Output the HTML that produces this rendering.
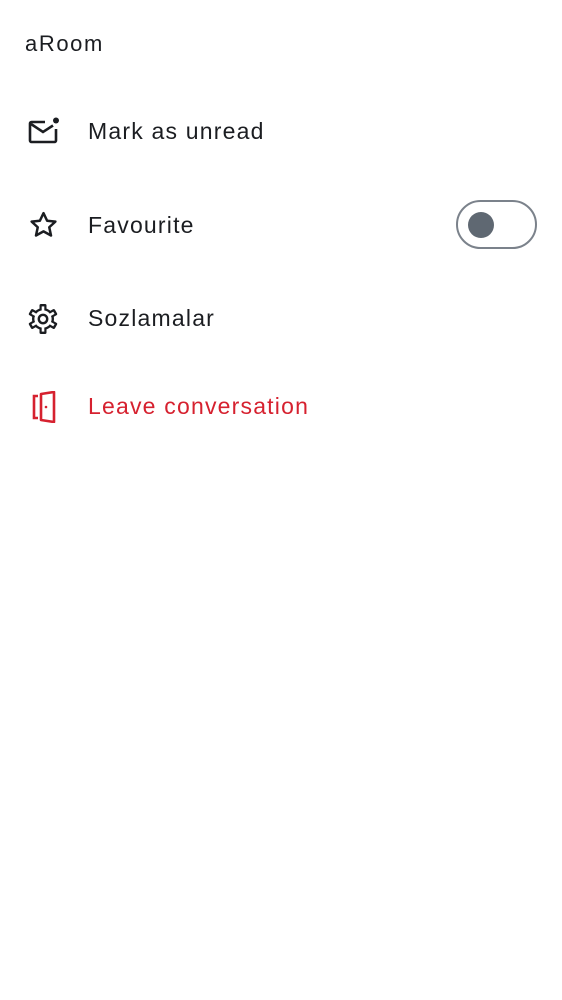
<!DOCTYPE html>
<html><head><meta charset="utf-8"><style>
body{margin:0;width:562px;height:1000px;background:#fff;font-family:"Liberation Sans",sans-serif;color:#1b1d21;position:relative;overflow:hidden}
.t{position:absolute;font-size:23px;letter-spacing:1.2px;line-height:1}
svg{position:absolute}
</style></head><body>
<div class="t" style="left:25px;top:33px;font-size:22px;letter-spacing:1.6px">aRoom</div>

<svg style="left:28px;top:117px" width="32" height="28" viewBox="0 0 32 28">
<path d="M17 5H3.5a1.5 1.5 0 0 0-1.5 1.5v17a1.5 1.5 0 0 0 1.5 1.5h23a1.5 1.5 0 0 0 1.5-1.5V12" fill="none" stroke="#1b1d21" stroke-width="2.6"/>
<path d="M3 7l12 8 10-6.5" fill="none" stroke="#1b1d21" stroke-width="2.6"/>
<circle cx="28" cy="3.5" r="3" fill="#1b1d21"/>
</svg>
<div class="t" style="left:88px;top:120px">Mark as unread</div>

<svg style="left:28px;top:210px" width="31" height="30" viewBox="0 0 24 24">
<path d="M12 2.5l2.9 6.1 6.6.7-4.9 4.5 1.4 6.6L12 17.1l-6 3.3 1.4-6.6-4.9-4.5 6.6-.7z" fill="none" stroke="#1b1d21" stroke-width="2" stroke-linejoin="round"/>
</svg>
<div class="t" style="left:88px;top:214px">Favourite</div>
<div style="position:absolute;left:456px;top:200px;width:77px;height:45px;border:2.5px solid #7b828b;border-radius:25px"></div>
<div style="position:absolute;left:468px;top:212px;width:26px;height:26px;border-radius:50%;background:#5f6872"></div>

<svg style="left:27px;top:303px" width="32" height="32" viewBox="0 0 32 32">
<g fill="#1b1d21" transform="translate(16 16)">
<circle r="11"/>
<rect x="-3.5" y="-15" width="7" height="6" rx="1.5"/>
<rect x="-3.5" y="-15" width="7" height="6" rx="1.5" transform="rotate(60)"/>
<rect x="-3.5" y="-15" width="7" height="6" rx="1.5" transform="rotate(120)"/>
<rect x="-3.5" y="-15" width="7" height="6" rx="1.5" transform="rotate(180)"/>
<rect x="-3.5" y="-15" width="7" height="6" rx="1.5" transform="rotate(240)"/>
<rect x="-3.5" y="-15" width="7" height="6" rx="1.5" transform="rotate(300)"/>
</g>
<g fill="#fff" transform="translate(16 16)">
<circle r="8.6"/>
<rect x="-1.3" y="-12.6" width="2.6" height="5" transform="rotate(0)"/>
<rect x="-1.3" y="-12.6" width="2.6" height="5" transform="rotate(60)"/>
<rect x="-1.3" y="-12.6" width="2.6" height="5" transform="rotate(120)"/>
<rect x="-1.3" y="-12.6" width="2.6" height="5" transform="rotate(180)"/>
<rect x="-1.3" y="-12.6" width="2.6" height="5" transform="rotate(240)"/>
<rect x="-1.3" y="-12.6" width="2.6" height="5" transform="rotate(300)"/>
</g>
<circle cx="16" cy="16" r="4.2" fill="none" stroke="#1b1d21" stroke-width="2.4"/>
</svg>
<div class="t" style="left:88px;top:307px">Sozlamalar</div>

<svg style="left:32px;top:391px" width="26" height="32" viewBox="0 0 26 32">
<path d="M6 5H2v22h4" fill="none" stroke="#d6212f" stroke-width="2.6"/>
<path d="M9 3l13-2v30l-13-2z" fill="none" stroke="#d6212f" stroke-width="2.6" stroke-linejoin="round"/>
<circle cx="14" cy="16" r="1.3" fill="#d6212f"/>
</svg>
<div class="t" style="left:88px;top:395px;color:#d6212f">Leave conversation</div>
</body></html>
